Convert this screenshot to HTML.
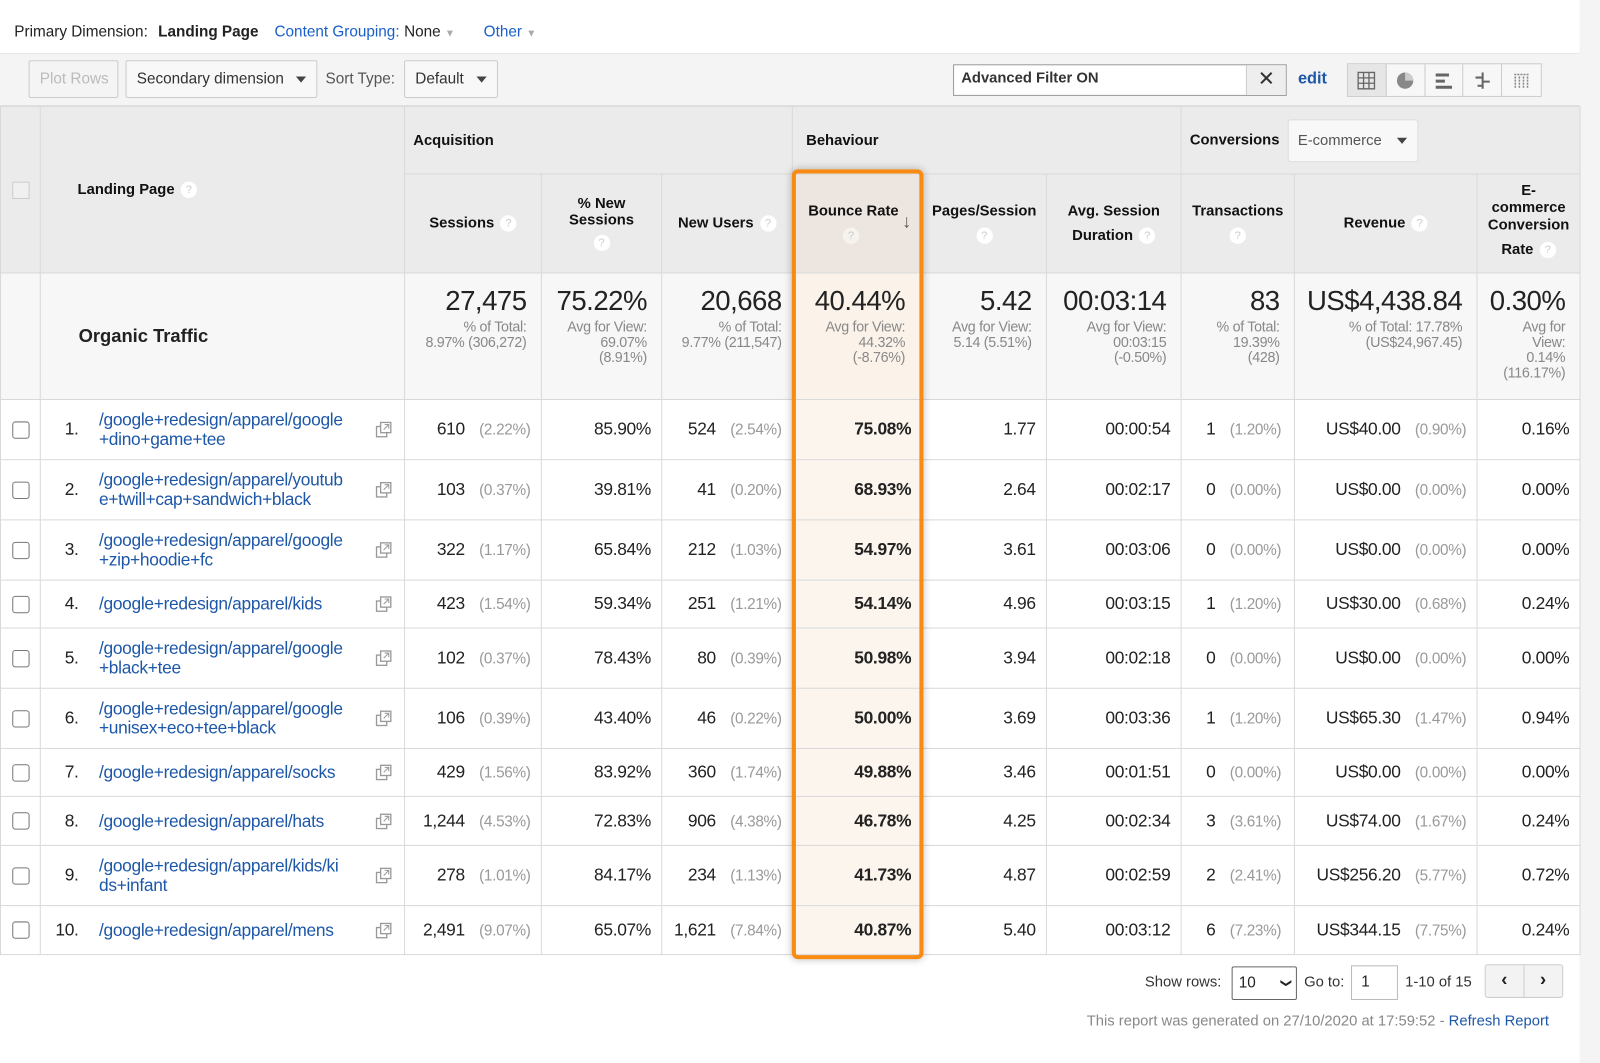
<!DOCTYPE html>
<html><head><meta charset="utf-8">
<style>
*{box-sizing:border-box;margin:0;padding:0}
body{width:1600px;height:1042px;background:#fff;font-family:"Liberation Sans",sans-serif;color:#222;position:relative;overflow:hidden}
#w{position:absolute;left:0;top:0;width:1568px;height:1021px;transform:scale(1.0204);transform-origin:0 0}
.rstrip{position:absolute;left:1548px;top:0;width:60px;height:1042px;background:#f4f4f4}
.top{position:absolute;left:0;top:0;width:1548px;height:53px;border-bottom:1px solid #e4e4e4;font-size:15px}
.top span{position:absolute;top:23px}
.blue{color:#1a5fc8}
.tb{position:absolute;left:0;top:53px;width:1548px;height:51px;background:#f4f4f4;border-bottom:1px solid #ddd;font-size:15px}
.btn{position:absolute;border:1px solid #ccc;border-radius:2px;background:#f8f8f8;height:37px;top:6px;line-height:35px;padding-left:10px;color:#333}
.car{position:absolute;right:10px;top:15px;width:0;height:0;border-left:5px solid transparent;border-right:5px solid transparent;border-top:6px solid #444}
table{position:absolute;left:0;top:104px;border-collapse:collapse;table-layout:fixed;width:1548px}
td{border:1px solid #d9d9d9;vertical-align:middle;font-size:17px;padding:0 10px;text-align:right;white-space:nowrap;letter-spacing:-0.3px}
.hd td{background:#ebebeb;font-weight:bold;font-size:14.5px;color:#111;letter-spacing:0}
.hd td.l{text-align:left}
.q{display:inline-block;width:16px;height:16px;border-radius:8px;background:#fff;color:#ccc;font-size:11px;text-align:center;line-height:16px;font-weight:normal;vertical-align:middle;margin-left:6px}
.sum td{background:#f7f7f7;vertical-align:top;padding-top:12px}
.big{font-size:27px;color:#222;letter-spacing:-0.5px}
.sm{font-size:14px;color:#888;line-height:15px;margin-top:2px;white-space:normal}
.g{color:#999;font-size:15px;margin-left:14px}
.lp{text-align:left;padding:0;position:relative}
.num{position:absolute;right:319px;top:50%;transform:translateY(-50%)}
.lnk{position:absolute;left:57px;top:50%;transform:translateY(-50%);color:#1d57a8;white-space:nowrap;line-height:19px}
.ic{position:absolute;right:12px;top:50%;margin-top:-8px;width:16px;height:16px}
.cb{width:17px;height:17px;border:1.5px solid #777;border-radius:3px;margin:0 auto;background:#fff}
.br{background:#fcf5ee!important;font-weight:bold}
.sum td.br{background:#fbf3ea!important;font-weight:normal}
.hd td.br{background:#ede6e0!important}
.orange{position:absolute;left:776px;top:166px;width:129px;height:774px;border:4px solid #f98a12;border-radius:6px;box-shadow:0 0 8px rgba(0,0,0,.25)}
.foot{position:absolute;font-size:14.5px;color:#333}
</style></head><body>
<div id="w">
<div class="rstrip"></div>
<div class="top">
<span style="left:14px">Primary Dimension:</span>
<span style="left:155px;font-weight:bold;color:#222">Landing Page</span>
<span style="left:269px" class="blue">Content Grouping:</span>
<span style="left:396px">None <span style="position:static;color:#aaa;font-size:10px">▼</span></span>
<span style="left:474px" class="blue">Other <span style="position:static;color:#aaa;font-size:10px">▼</span></span>
</div>
<div class="tb">
<div class="btn" style="left:28px;width:88px;color:#bbb;background:#f4f4f4">Plot Rows</div>
<div class="btn" style="left:123px;width:188px">Secondary dimension<span class="car"></span></div>
<span style="position:absolute;left:319px;top:16px;color:#555">Sort Type:</span>
<div class="btn" style="left:396px;width:92px">Default<span class="car"></span></div>
<div style="position:absolute;left:934px;top:10px;width:327px;height:31px;border:1px solid #999;background:#fff;font-weight:bold;font-size:14.5px;line-height:27px;padding-left:7px;color:#333">Advanced Filter ON
<div style="position:absolute;right:0;top:0;width:39px;height:29px;background:#eee;border-left:1px solid #ccc;text-align:center;font-weight:normal;font-size:20px;line-height:29px">✕</div></div>
<span style="position:absolute;left:1272px;top:16px;color:#1d57a8;font-weight:bold;font-size:16px">edit</span>
<div style="position:absolute;left:1320px;top:9px;width:191px;height:33px;border:1px solid #ccc;background:#f7f7f7;display:flex">
<div style="width:38px;border-right:1px solid #ccc;background:#e6e6e6;display:flex;align-items:center;justify-content:center"><svg width="18" height="18"><path d="M1 1h16v16H1zM1 6.3h16M1 11.6h16M6.3 1v16M11.6 1v16" fill="none" stroke="#666" stroke-width="1.3"/></svg></div>
<div style="width:38px;border-right:1px solid #ccc;display:flex;align-items:center;justify-content:center"><svg width="18" height="18"><circle cx="9" cy="9" r="8" fill="#888"/><path d="M9 1v8h8A8 8 0 0 0 9 1z" fill="#ccc"/></svg></div>
<div style="width:38px;border-right:1px solid #ccc;display:flex;align-items:center;justify-content:center"><svg width="18" height="18"><path d="M1 2h13v3H1zM1 8h9v3H1zM1 14h16v3H1z" fill="#666"/></svg></div>
<div style="width:38px;border-right:1px solid #ccc;display:flex;align-items:center;justify-content:center"><svg width="18" height="18"><path d="M9 1v16M2 6h7M9 10h7M4 14h5" stroke="#666" stroke-width="2"/></svg></div>
<div style="width:38px;display:flex;align-items:center;justify-content:center"><svg width="18" height="18"><path d="M2 3h14M3 5v11M7 5v11M11 5v11M15 5v11" stroke="#888" stroke-width="1.5" stroke-dasharray="2 1"/></svg></div>
</div>
</div>

<table>
<colgroup><col style="width:39px"><col style="width:357px"><col style="width:134px"><col style="width:118px"><col style="width:128px"><col style="width:127px"><col style="width:122px"><col style="width:132px"><col style="width:111px"><col style="width:179px"><col style="width:101px"></colgroup>
<tr class="hd" style="height:66px">
<td rowspan="2" style="padding:0"><div style="width:17px;height:17px;border:1px solid #ccc;background:#f0f0f0;margin:0 auto"></div></td>
<td rowspan="2" class="l" style="padding-left:36px">Landing Page<span class="q">?</span></td>
<td colspan="3" class="l" style="padding-left:8px">Acquisition</td>
<td colspan="3" class="l" style="padding-left:13px;background:#ebebeb">Behaviour</td>
<td colspan="3" class="l" style="padding-left:8px">Conversions <span style="display:inline-block;margin-left:4px;width:128px;height:42px;border:1px solid #ddd;border-radius:3px;background:#f8f8f8;font-weight:normal;color:#555;line-height:40px;padding-left:9px;position:relative;vertical-align:middle">E-commerce<span class="car" style="top:17px"></span></span></td>
</tr>
<tr class="hd" style="height:97px">
<td style="text-align:center;padding:0">Sessions<span class="q">?</span></td>
<td style="text-align:center;padding:0;line-height:16px">% New<br>Sessions<br><span class="q" style="margin:6px 0 0">?</span></td>
<td style="text-align:center;padding:0">New Users<span class="q">?</span></td>
<td class="br" style="text-align:left;padding:0 0 0 15px;line-height:16px;position:relative">Bounce Rate<br><span class="q" style="margin:8px 0 0 34px;background:#f6f2ee">?</span><span style="position:absolute;right:10px;top:38px;font-size:18px;color:#555;font-weight:normal">↓</span></td>
<td style="text-align:center;padding:0;line-height:16px">Pages/Session<br><span class="q" style="margin:8px 0 0">?</span></td>
<td style="text-align:center;padding:0;line-height:24px">Avg. Session<br>Duration<span class="q">?</span></td>
<td style="text-align:center;padding:0;line-height:16px">Transactions<br><span class="q" style="margin:8px 0 0">?</span></td>
<td style="text-align:center;padding:0">Revenue<span class="q">?</span></td>
<td style="text-align:center;padding:0;line-height:17px">E-<br>commerce<br>Conversion<br><span style="line-height:30px">Rate</span><span class="q">?</span></td>
</tr>
<tr class="sum" style="height:124px">
<td></td>
<td style="text-align:left;padding:0 0 0 37px;vertical-align:middle;font-weight:bold;font-size:18px;letter-spacing:0">Organic Traffic</td>
<td style="padding-right:14px"><div class="big">27,475</div><div class="sm">% of Total:<br>8.97% (306,272)</div></td>
<td style="padding-right:14px"><div class="big">75.22%</div><div class="sm">Avg for View:<br>69.07%<br>(8.91%)</div></td>
<td style="padding-right:10px"><div class="big">20,668</div><div class="sm">% of Total:<br>9.77% (211,547)</div></td>
<td class="br" style="padding-right:16px"><div class="big">40.44%</div><div class="sm">Avg for View:<br>44.32%<br>(-8.76%)</div></td>
<td style="padding-right:14px"><div class="big">5.42</div><div class="sm">Avg for View:<br>5.14 (5.51%)</div></td>
<td style="padding-right:14px"><div class="big">00:03:14</div><div class="sm">Avg for View:<br>00:03:15<br>(-0.50%)</div></td>
<td style="padding-right:14px"><div class="big">83</div><div class="sm">% of Total:<br>19.39%<br>(428)</div></td>
<td style="padding-right:14px"><div class="big">US$4,438.84</div><div class="sm">% of Total: 17.78%<br>(US$24,967.45)</div></td>
<td style="padding-right:14px"><div class="big">0.30%</div><div class="sm">Avg for<br>View:<br>0.14%<br>(116.17%)</div></td>
</tr>
<tr style="height:59px"><td><div class="cb"></div></td><td class="lp"><span class="num">1.</span><span class="lnk">/google+redesign/apparel/google<br>+dino+game+tee</span><svg class="ic"><rect x="1" y="5" width="10" height="10" fill="none" stroke="#999" stroke-width="1.3"/><rect x="5" y="1" width="10" height="10" fill="#fff" stroke="#999" stroke-width="1.3"/><path d="M8 8l5-5M9 3h4v4" stroke="#999" fill="none"/></svg></td><td>610<span class="g">(2.22%)</span></td><td>85.90%</td><td>524<span class="g">(2.54%)</span></td><td class="br">75.08%</td><td>1.77</td><td>00:00:54</td><td style="text-align:left;padding-left:24px">1<span class="g">(1.20%)</span></td><td>US$40.00<span class="g">(0.90%)</span></td><td>0.16%</td></tr>
<tr style="height:59px"><td><div class="cb"></div></td><td class="lp"><span class="num">2.</span><span class="lnk">/google+redesign/apparel/youtub<br>e+twill+cap+sandwich+black</span><svg class="ic"><rect x="1" y="5" width="10" height="10" fill="none" stroke="#999" stroke-width="1.3"/><rect x="5" y="1" width="10" height="10" fill="#fff" stroke="#999" stroke-width="1.3"/><path d="M8 8l5-5M9 3h4v4" stroke="#999" fill="none"/></svg></td><td>103<span class="g">(0.37%)</span></td><td>39.81%</td><td>41<span class="g">(0.20%)</span></td><td class="br">68.93%</td><td>2.64</td><td>00:02:17</td><td style="text-align:left;padding-left:24px">0<span class="g">(0.00%)</span></td><td>US$0.00<span class="g">(0.00%)</span></td><td>0.00%</td></tr>
<tr style="height:59px"><td><div class="cb"></div></td><td class="lp"><span class="num">3.</span><span class="lnk">/google+redesign/apparel/google<br>+zip+hoodie+fc</span><svg class="ic"><rect x="1" y="5" width="10" height="10" fill="none" stroke="#999" stroke-width="1.3"/><rect x="5" y="1" width="10" height="10" fill="#fff" stroke="#999" stroke-width="1.3"/><path d="M8 8l5-5M9 3h4v4" stroke="#999" fill="none"/></svg></td><td>322<span class="g">(1.17%)</span></td><td>65.84%</td><td>212<span class="g">(1.03%)</span></td><td class="br">54.97%</td><td>3.61</td><td>00:03:06</td><td style="text-align:left;padding-left:24px">0<span class="g">(0.00%)</span></td><td>US$0.00<span class="g">(0.00%)</span></td><td>0.00%</td></tr>
<tr style="height:47px"><td><div class="cb"></div></td><td class="lp"><span class="num">4.</span><span class="lnk">/google+redesign/apparel/kids</span><svg class="ic"><rect x="1" y="5" width="10" height="10" fill="none" stroke="#999" stroke-width="1.3"/><rect x="5" y="1" width="10" height="10" fill="#fff" stroke="#999" stroke-width="1.3"/><path d="M8 8l5-5M9 3h4v4" stroke="#999" fill="none"/></svg></td><td>423<span class="g">(1.54%)</span></td><td>59.34%</td><td>251<span class="g">(1.21%)</span></td><td class="br">54.14%</td><td>4.96</td><td>00:03:15</td><td style="text-align:left;padding-left:24px">1<span class="g">(1.20%)</span></td><td>US$30.00<span class="g">(0.68%)</span></td><td>0.24%</td></tr>
<tr style="height:59px"><td><div class="cb"></div></td><td class="lp"><span class="num">5.</span><span class="lnk">/google+redesign/apparel/google<br>+black+tee</span><svg class="ic"><rect x="1" y="5" width="10" height="10" fill="none" stroke="#999" stroke-width="1.3"/><rect x="5" y="1" width="10" height="10" fill="#fff" stroke="#999" stroke-width="1.3"/><path d="M8 8l5-5M9 3h4v4" stroke="#999" fill="none"/></svg></td><td>102<span class="g">(0.37%)</span></td><td>78.43%</td><td>80<span class="g">(0.39%)</span></td><td class="br">50.98%</td><td>3.94</td><td>00:02:18</td><td style="text-align:left;padding-left:24px">0<span class="g">(0.00%)</span></td><td>US$0.00<span class="g">(0.00%)</span></td><td>0.00%</td></tr>
<tr style="height:59px"><td><div class="cb"></div></td><td class="lp"><span class="num">6.</span><span class="lnk">/google+redesign/apparel/google<br>+unisex+eco+tee+black</span><svg class="ic"><rect x="1" y="5" width="10" height="10" fill="none" stroke="#999" stroke-width="1.3"/><rect x="5" y="1" width="10" height="10" fill="#fff" stroke="#999" stroke-width="1.3"/><path d="M8 8l5-5M9 3h4v4" stroke="#999" fill="none"/></svg></td><td>106<span class="g">(0.39%)</span></td><td>43.40%</td><td>46<span class="g">(0.22%)</span></td><td class="br">50.00%</td><td>3.69</td><td>00:03:36</td><td style="text-align:left;padding-left:24px">1<span class="g">(1.20%)</span></td><td>US$65.30<span class="g">(1.47%)</span></td><td>0.94%</td></tr>
<tr style="height:47px"><td><div class="cb"></div></td><td class="lp"><span class="num">7.</span><span class="lnk">/google+redesign/apparel/socks</span><svg class="ic"><rect x="1" y="5" width="10" height="10" fill="none" stroke="#999" stroke-width="1.3"/><rect x="5" y="1" width="10" height="10" fill="#fff" stroke="#999" stroke-width="1.3"/><path d="M8 8l5-5M9 3h4v4" stroke="#999" fill="none"/></svg></td><td>429<span class="g">(1.56%)</span></td><td>83.92%</td><td>360<span class="g">(1.74%)</span></td><td class="br">49.88%</td><td>3.46</td><td>00:01:51</td><td style="text-align:left;padding-left:24px">0<span class="g">(0.00%)</span></td><td>US$0.00<span class="g">(0.00%)</span></td><td>0.00%</td></tr>
<tr style="height:48px"><td><div class="cb"></div></td><td class="lp"><span class="num">8.</span><span class="lnk">/google+redesign/apparel/hats</span><svg class="ic"><rect x="1" y="5" width="10" height="10" fill="none" stroke="#999" stroke-width="1.3"/><rect x="5" y="1" width="10" height="10" fill="#fff" stroke="#999" stroke-width="1.3"/><path d="M8 8l5-5M9 3h4v4" stroke="#999" fill="none"/></svg></td><td>1,244<span class="g">(4.53%)</span></td><td>72.83%</td><td>906<span class="g">(4.38%)</span></td><td class="br">46.78%</td><td>4.25</td><td>00:02:34</td><td style="text-align:left;padding-left:24px">3<span class="g">(3.61%)</span></td><td>US$74.00<span class="g">(1.67%)</span></td><td>0.24%</td></tr>
<tr style="height:59px"><td><div class="cb"></div></td><td class="lp"><span class="num">9.</span><span class="lnk">/google+redesign/apparel/kids/ki<br>ds+infant</span><svg class="ic"><rect x="1" y="5" width="10" height="10" fill="none" stroke="#999" stroke-width="1.3"/><rect x="5" y="1" width="10" height="10" fill="#fff" stroke="#999" stroke-width="1.3"/><path d="M8 8l5-5M9 3h4v4" stroke="#999" fill="none"/></svg></td><td>278<span class="g">(1.01%)</span></td><td>84.17%</td><td>234<span class="g">(1.13%)</span></td><td class="br">41.73%</td><td>4.87</td><td>00:02:59</td><td style="text-align:left;padding-left:24px">2<span class="g">(2.41%)</span></td><td>US$256.20<span class="g">(5.77%)</span></td><td>0.72%</td></tr>
<tr style="height:48px"><td><div class="cb"></div></td><td class="lp"><span class="num">10.</span><span class="lnk">/google+redesign/apparel/mens</span><svg class="ic"><rect x="1" y="5" width="10" height="10" fill="none" stroke="#999" stroke-width="1.3"/><rect x="5" y="1" width="10" height="10" fill="#fff" stroke="#999" stroke-width="1.3"/><path d="M8 8l5-5M9 3h4v4" stroke="#999" fill="none"/></svg></td><td>2,491<span class="g">(9.07%)</span></td><td>65.07%</td><td>1,621<span class="g">(7.84%)</span></td><td class="br">40.87%</td><td>5.40</td><td>00:03:12</td><td style="text-align:left;padding-left:24px">6<span class="g">(7.23%)</span></td><td>US$344.15<span class="g">(7.75%)</span></td><td>0.24%</td></tr>
</table>
<div class="orange"></div>

<span class="foot" style="left:1122px;top:955px">Show rows:</span>
<div style="position:absolute;left:1207px;top:947px;width:64px;height:33px;border:1px solid #666;border-radius:2px;background:#fff;font-size:15px;line-height:31px;padding-left:6px">10<span style="position:absolute;right:6px;top:0;font-size:11px;transform:rotate(90deg)">❯</span></div>
<span class="foot" style="left:1278px;top:955px">Go to:</span>
<div style="position:absolute;left:1324px;top:946px;width:46px;height:34px;border:1px solid #bbb;background:#fff;font-size:15px;line-height:32px;padding-left:9px">1</div>
<span class="foot" style="left:1377px;top:955px">1-10 of 15</span>
<div style="position:absolute;left:1455px;top:945px;width:77px;height:33px;border:1px solid #ccc;border-radius:3px;background:#f3f3f3;display:flex;font-weight:bold;font-size:18px">
<div style="width:38px;border-right:1px solid #ccc;text-align:center;line-height:29px">‹</div><div style="width:38px;text-align:center;line-height:29px">›</div></div>
<span class="foot" style="left:1065px;top:993px;color:#888">This report was generated on 27/10/2020 at 17:59:52 - <span style="color:#1d57a8">Refresh Report</span></span>
</div>
</body></html>
